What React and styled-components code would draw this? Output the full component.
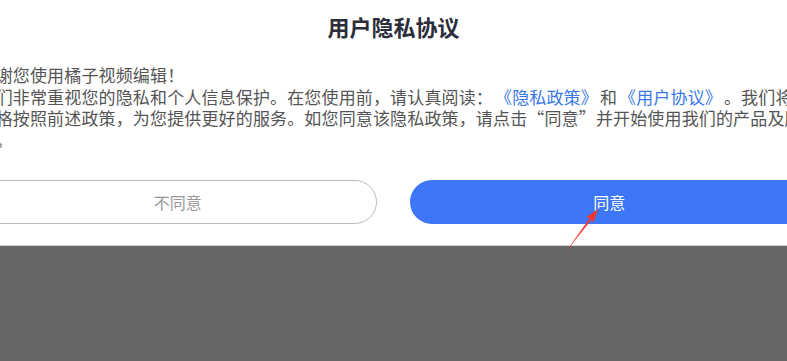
import React from 'react';
import styled, { createGlobalStyle } from 'styled-components';

const GlobalStyle = createGlobalStyle`
  html, body {
    margin: 0;
    padding: 0;
    background: #666666;
    overflow: hidden;
  }
  body {
    font-family: "Noto Sans CJK SC", "Noto Sans", sans-serif;
  }
`;

export default function App() {
  return (
    <Page>
      <GlobalStyle />
      <Sheet>
        <Content>
          <Title>用户隐私协议</Title>
          <Body>
            <Line>感谢您使用橘子视频编辑！</Line>
            <Line>
              我们非常重视您的隐私和个人信息保护。在您使用前，请认真阅读：<Link>《隐私政策》</Link>和<Link>《用户协议》</Link>。我们将
              <br />
              严格按照前述政策，为您提供更好的服务。如您同意该隐私政策，请点击“同意”并开始使用我们的产品及服
              <br />
              务。
            </Line>
          </Body>
          <Actions>
            <Button>不同意</Button>
            <Button primary>同意</Button>
          </Actions>
        </Content>
      </Sheet>
      <Pointer viewBox="0 0 787 361">
        <polygon
          points="565.2,252.8 591.8,219.3 593.2,222.9 598,209 586,217.5 589.8,217.9"
          fill="#f2362b"
        />
      </Pointer>
    </Page>
  );
}

const Page = styled.div`
  position: relative;
  width: 787px;
  height: 361px;
  overflow: hidden;
`;

const Sheet = styled.div`
  background: #ffffff;
  height: 245px;
  border-bottom: 1px solid #d2d2d2;
  display: flex;
  justify-content: center;
`;

const Content = styled.div`
  flex-shrink: 0;
  width: 830px;
  padding-top: 11px;
`;

const Title = styled.h1`
  margin: 0;
  text-align: center;
  font-size: 22px;
  line-height: 30px;
  font-weight: 600;
  color: #2b2d3a;
`;

const Body = styled.div`
  margin-top: 23px;
  font-size: 17px;
  line-height: 21.5px;
  letter-spacing: 0.15px;
  color: #555555;
  white-space: nowrap;
  text-spacing-trim: space-all;
`;

const Line = styled.p`
  margin: 0;
`;

const Link = styled.span`
  margin: 0 2px;
  color: #3a78e8;
`;

const Actions = styled.div`
  margin-top: 30px;
  display: grid;
  grid-template-columns: 1fr 1fr;
  gap: 33px;
`;

const Button = styled.div`
  height: 44px;
  box-sizing: border-box;
  border-radius: 22px;
  display: flex;
  align-items: center;
  justify-content: center;
  font-size: 16px;
  color: ${p => (p.primary ? '#ffffff' : '#999999')};
  background: ${p => (p.primary ? '#3d77f7' : '#ffffff')};
  border: ${p => (p.primary ? 'none' : '1.5px solid #bdbdbd')};
`;

const Pointer = styled.svg`
  position: absolute;
  left: 0;
  top: 0;
  width: 787px;
  height: 361px;
  pointer-events: none;
`;
